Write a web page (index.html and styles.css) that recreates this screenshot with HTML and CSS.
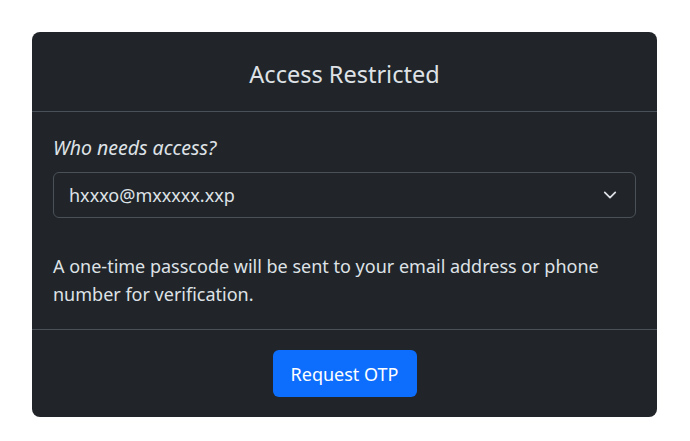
FILE: index.html
```html
<!DOCTYPE html>
<html lang="en">
<head>
    <meta charset="UTF-8">
    <meta name="viewport" content="width=device-width, initial-scale=1.0">
    <title>Access Restricted</title>
    <link rel="stylesheet" href="styles.css">
</head>
<body>
    <div class="card">
        <div class="card-header">
            <h1>Access Restricted</h1>
        </div>
        <div class="card-body">
            <label class="field-label" for="who">Who needs access?</label>
            <div class="select">
                <span class="select-value">hxxxo@mxxxxx.xxp</span>
                <svg class="chevron" width="16" height="16" viewBox="0 0 16 16">
                    <path d="M2 5l6 6 6-6" fill="none" stroke="#dee2e6" stroke-width="2" stroke-linecap="round" stroke-linejoin="round"/>
                </svg>
            </div>
            <p class="note">A one-time passcode will be sent to your email address or phone number for verification.</p>
        </div>
        <div class="card-footer">
            <button class="btn">Request OTP</button>
        </div>
    </div>
</body>
</html>
```

FILE: styles.css
```css
body {
    margin: 0;
    padding: 32px;
    background-color: #fff;
    font-family: "Noto Sans", "Open Sans", sans-serif;
    color: #dee2e6;
}

.card {
    width: 625px;
    height: 385px;
    background-color: #212529;
    border-radius: 8px;
    display: flex;
    flex-direction: column;
    box-sizing: border-box;
}

.card-header {
    height: 80px;
    border-bottom: 1px solid #495057;
    display: flex;
    align-items: center;
    justify-content: center;
    box-sizing: border-box;
}

.card-header h1 {
    margin: 0;
    font-size: 23.5px;
    font-weight: 400;
    padding-top: 4px;
}

.card-body {
    padding: 23px 21px 0 21px;
    height: 218px;
    box-sizing: border-box;
    border-bottom: 1px solid #495057;
}

.field-label {
    display: block;
    font-style: italic;
    font-size: 19.5px;
    line-height: 26px;
    margin-bottom: 11px;
}

.select {
    height: 46px;
    border: 1px solid #495057;
    border-radius: 6px;
    display: flex;
    align-items: center;
    justify-content: space-between;
    padding: 0 18px 0 15px;
    box-sizing: border-box;
    font-size: 18px;
}

.chevron {
    width: 14px;
    height: 14px;
}

.note {
    margin: 34px 0 0 0;
    font-size: 18px;
    line-height: 28px;
}

.card-footer {
    flex: 1;
    display: flex;
    justify-content: center;
    align-items: center;
}

.btn {
    width: 144px;
    height: 47px;
    background-color: #0d6efd;
    color: #fff;
    border: none;
    border-radius: 6px;
    font-family: inherit;
    font-size: 18px;
}
```
